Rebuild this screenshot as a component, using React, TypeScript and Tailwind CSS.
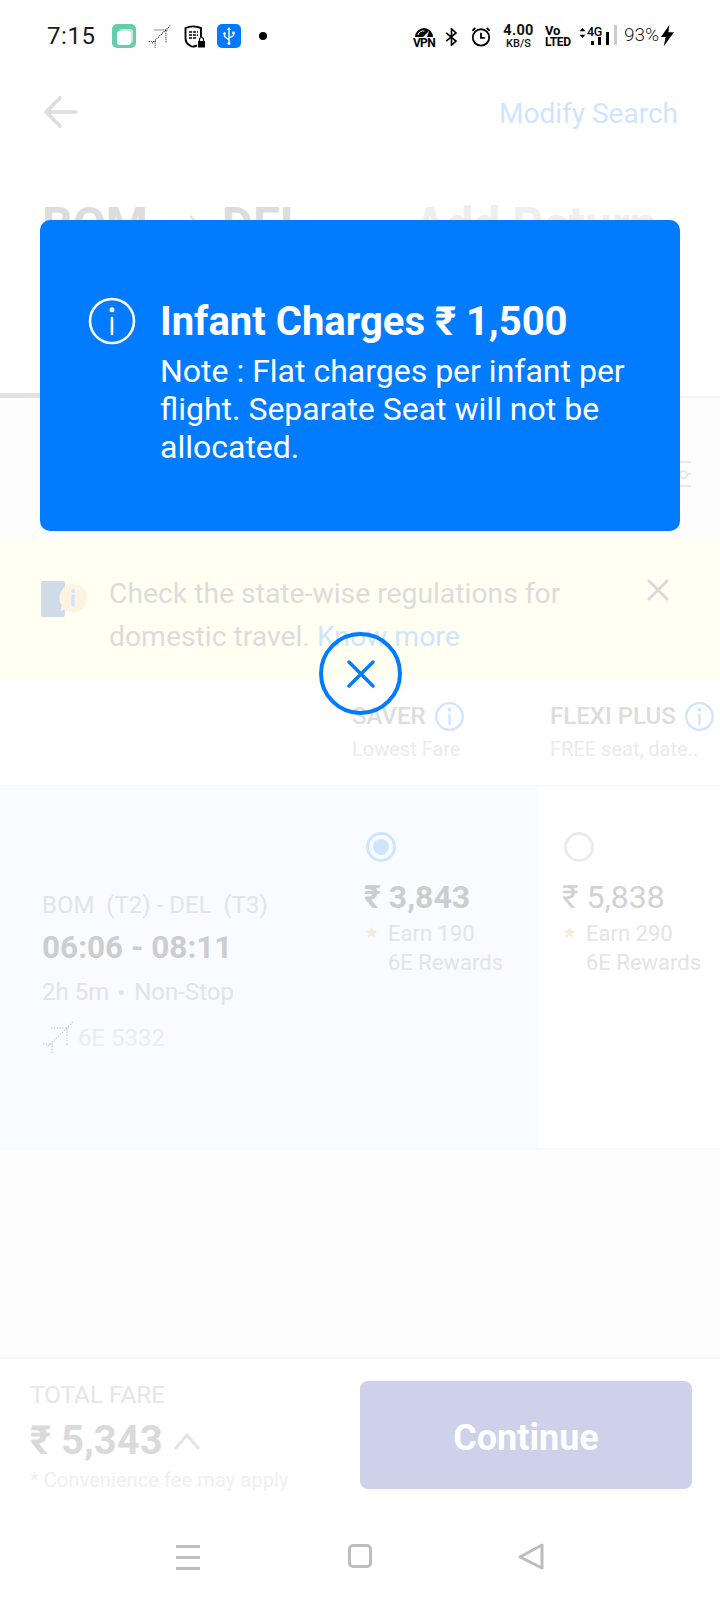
import React from "react";

const Info = ({ size, color, sw = 1.6 }: { size: number; color: string; sw?: number }) => (
  <svg width={size} height={size} viewBox="0 0 24 24" fill="none" stroke={color} strokeWidth={sw} strokeLinecap="round" className="shrink-0">
    <circle cx="12" cy="12" r="11" />
    <line x1="12" y1="10.5" x2="12" y2="18.5" />
    <circle cx="12" cy="6.4" r="0.6" fill={color} />
  </svg>
);

const Plane = ({ size, color }: { size: number; color: string }) => (
  <svg width={size} height={size} viewBox="0 0 32 32" fill="none" stroke={color} strokeWidth="1.5" strokeDasharray="1.4 1.4" className="shrink-0">
    <path d="M31 1 L5 26" />
    <path d="M9 7 H27 M25 8 V25 M1 23 H11 M10 22 V32" />
  </svg>
);

const Star = () => (
  <svg width="13" height="13" viewBox="0 0 24 24" fill="#f6ecd8" className="shrink-0">
    <path d="M12 1.5l3.2 7 7.6.8-5.7 5.1 1.6 7.5L12 18.1 5.3 21.9l1.6-7.5L1.2 9.3l7.6-.8z" />
  </svg>
);

const StatusBar = () => (
  <div className="h-[72px] flex items-start pt-6 pl-[47px] pr-[46px] text-black shrink-0">
    <span className="text-[24px] leading-[24px] tracking-[0.6px] w-[65px] font-normal text-[#1a1a1a]">7:15</span>
    <div className="w-6 h-6 rounded-[5px] bg-[#66cdaa] relative">
      <div className="w-3.5 h-3.5 rounded-[3px] bg-white/60 absolute left-[7px] top-[5px]" />
      <div className="w-3.5 h-3.5 rounded-[3px] bg-white absolute left-[5px] top-[7px]" />
    </div>
    <div className="ml-[12px] mt-[1px]"><Plane size={23} color="#222" /></div>
    <svg width="21" height="23" viewBox="0 0 21 23" className="ml-[13px] mt-[1px]" fill="none">
      <path d="M13 20.5 C 9 22 8 22 6 20.5 C 3 19 1.5 16 1.5 13 V3 C 6 1 12 1 17 3 V12" stroke="#000" strokeWidth="1.9" />
      <path d="M5 7h9M5 10h9M5 13h8" stroke="#000" strokeWidth="1.7" strokeDasharray="3 1" />
      <rect x="14" y="16" width="7" height="6.5" fill="#000" />
      <path d="M15.5 16v-1.5a2 2 0 0 1 4 0V16" stroke="#000" strokeWidth="1.2" />
    </svg>
    <div className="w-6 h-6 rounded-[5px] bg-[#007aff] ml-[12px] flex items-center justify-center">
      <svg width="14" height="18" viewBox="0 0 14 18" fill="none" stroke="#fff" strokeWidth="1.4">
        <path d="M7 1v16M7 13 L2.5 9.5V7M7 11l4.5-2.5V6" />
        <path d="M7 0l2 3H5z" fill="#fff" stroke="none" />
        <circle cx="2.5" cy="6.5" r="1.3" fill="#fff" stroke="none" />
        <rect x="10.3" y="4.6" width="2.4" height="2.4" fill="#fff" stroke="none" />
        <circle cx="7" cy="16.5" r="1.4" fill="#fff" stroke="none" />
      </svg>
    </div>
    <div className="w-2 h-2 rounded-full bg-black ml-[18px] mt-2" />
    <div className="flex-1" />
    <div className="w-5 flex flex-col items-center mt-[3px]">
      <svg width="20" height="11" viewBox="0 0 20 11" fill="none">
        <path d="M1 10 A9 9 0 0 1 19 10 H13 L15 4 L9 10 Z" fill="#000" />
        <path d="M4 8 A6 6 0 0 1 10.5 4" stroke="#fff" strokeWidth="1" />
      </svg>
      <span className="text-[12px] leading-[10px] font-bold tracking-[-0.6px] whitespace-nowrap">VPN</span>
    </div>
    <svg width="15" height="18" viewBox="0 0 15 22" fill="none" stroke="#000" strokeWidth="2" className="ml-[10px] mt-[4px]">
      <path d="M1 6 L13 16 L7.5 21 V1 L13 6 L1 16" />
    </svg>
    <svg width="20" height="21" viewBox="0 0 20 22" fill="none" stroke="#000" strokeWidth="1.9" className="ml-[12px] mt-[2px]">
      <circle cx="10" cy="12" r="8.6" />
      <path d="M10 7v5.5h4M1 5l3-3M19 5l-3-3" />
    </svg>
    <div className="w-[31px] ml-[12px] flex flex-col items-center text-[#111]">
      <span className="text-[14.5px] leading-[13px] font-bold tracking-[0.3px] whitespace-nowrap">4.00</span>
      <span className="text-[11px] leading-[10px] mt-[2px] font-medium whitespace-nowrap">KB/S</span>
    </div>
    <div className="w-[24px] ml-[11px] flex flex-col items-start mt-[2px] text-black font-bold">
      <span className="text-[13px] leading-[10px] tracking-[-0.2px]">Vo</span>
      <span className="text-[12px] leading-[10px] mt-[1px] tracking-[-0.4px] whitespace-nowrap">LTED</span>
    </div>
    <div className="relative w-[30px] h-[24px] ml-[10px]">
      <svg width="7" height="10" viewBox="0 0 8 12" fill="#000" className="absolute left-0 top-[4px]"><path d="M4 0l3.5 4h-7zM4 12l3.5-4h-7z" /></svg>
      <span className="absolute left-[8px] top-[2px] text-[12.5px] leading-[12px] tracking-[-0.3px] font-medium">4G</span>
      <div className="absolute top-[17px] left-[12px] w-[3px] h-[4px] bg-black" />
      <div className="absolute top-[13px] left-[19px] w-[3px] h-[8px] bg-black" />
      <div className="absolute top-[8px] left-[27px] w-[3px] h-[13px] bg-black" />
    </div>
    <div className="w-[3px] h-5 bg-[#ccc] ml-[5px] mt-[1px]" />
    <span className="text-[19px] leading-[22px] w-[33px] ml-[7px] font-light text-[#222] whitespace-nowrap">93%</span>
    <svg width="13" height="23" viewBox="0 0 14 23" fill="#000" className="ml-[4px]"><path d="M9 0L0 13h5l-2 10 11-15H8z" /></svg>
  </div>
);

export default function App() {
  return (
    <div className="relative w-[720px] h-[1600px] overflow-hidden bg-white font-['Roboto',sans-serif]">
      <StatusBar />

      {/* Header */}
      <div className="h-[76px] pt-[4px] pl-[44px] pr-[42px] flex items-center justify-between shrink-0">
        <svg width="34" height="32" viewBox="0 0 34 32" fill="none" stroke="#dedede" strokeWidth="3.6" strokeLinecap="round" strokeLinejoin="round">
          <path d="M32 16H3M16 2L2 16l14 14" />
        </svg>
        <span className="text-[28px] text-[#cfe5ff] mt-[4px]">Modify Search</span>
      </div>

      {/* Title */}
      <div className="h-[245px] pl-[42px] pt-[49px] flex items-start text-[#dcdcdc]">
        <span className="text-[48px] leading-[56px] font-bold">BOM</span>
        <svg width="36" height="40" viewBox="0 0 36 40" fill="none" stroke="#e4e4e4" strokeWidth="2.5" className="ml-[26px] mt-[17px]">
          <path d="M2 19H33M16 2l17 17-17 17" />
        </svg>
        <span className="text-[48px] leading-[56px] font-bold ml-[12px]">DEL</span>
        <span className="text-[48px] leading-[56px] ml-[108px] font-bold text-[#eeeeee] whitespace-nowrap">Add Return</span>
      </div>
      <div className="h-[5px] flex items-end">
        <div className="w-[360px] h-[5px] bg-[#e2e2e2]" />
        <div className="flex-1 h-[2px] bg-[#f5f5f5]" />
      </div>

      {/* Filter strip */}
      <div className="h-[141px] bg-[#fdfdfd] flex justify-end pr-[29px] pt-[63px]">
        <div className="w-3 h-[26px] flex flex-col justify-between">
          <div className="h-[2px] bg-[#e8e8e8]" />
          <div className="flex items-center">
            <div className="w-[9px] h-[9px] rounded-full border-2 border-[#e8e8e8]" />
            <div className="flex-1 h-[2px] bg-[#e8e8e8]" />
          </div>
          <div className="h-[2px] bg-[#e8e8e8]" />
        </div>
      </div>

      {/* Yellow banner */}
      <div className="h-[141px] bg-[#fffff2] pl-[41px] pr-[50px] pt-[33px] flex">
        <div className="relative w-[46px] h-[36px] mt-[9px] shrink-0">
          <div className="w-6 h-[36px] rounded-[2px] bg-[#d0dbea]" />
          <svg width="30" height="30" viewBox="0 0 30 30" className="absolute left-[17px] top-[2px]">
            <path d="M15 1a14 14 0 1 1-8 25.5L2 28l2-5A14 14 0 0 1 15 1z" fill="#fdf3e0" />
            <path d="M15 13v9" stroke="#cfe5ff" strokeWidth="3.4" strokeLinecap="round" />
            <circle cx="15" cy="8" r="2" fill="#cfe5ff" />
          </svg>
        </div>
        <p className="flex-1 ml-[22px] text-[28.3px] leading-[43px] text-[#dcdcdc] whitespace-nowrap">
          Check the state-wise regulations for<br />domestic travel. <span className="text-[#cfe5ff]">Know more</span>
        </p>
        <svg width="24" height="24" viewBox="0 0 24 24" fill="none" stroke="#d8d8d8" strokeWidth="2.6" className="mt-[6px]">
          <path d="M2 2l20 20M22 2L2 22" />
        </svg>
      </div>

      {/* Fare headers */}
      <div className="h-[105px] flex pt-[20px]">
        <div className="w-[352px]" />
        <div className="w-[198px]">
          <div className="flex items-center gap-[9px] text-[24px] leading-[32px] text-[#dddddd] font-medium">SAVER <Info size={29} color="#cfe5ff" sw={1.9} /></div>
          <div className="text-[20px] leading-[28px] mt-[3px] text-[#ebebeb]">Lowest Fare</div>
        </div>
        <div>
          <div className="flex items-center gap-[9px] text-[24px] leading-[32px] text-[#dddddd] font-medium whitespace-nowrap">FLEXI PLUS <Info size={29} color="#cfe5ff" sw={1.9} /></div>
          <div className="text-[20px] leading-[28px] mt-[3px] text-[#ebebeb] whitespace-nowrap">FREE seat, date..</div>
        </div>
      </div>

      {/* Flight row */}
      <div className="h-[365px] border-y-2 border-[#f9f9f9] flex">
        <div className="w-[538px] bg-[#f8fbff] flex">
          <div className="w-[364px] pl-[42px] pt-[104px]">
            <div className="text-[24px] leading-[28px] text-[#e4e4e4] whitespace-pre">BOM  (T2) - DEL  (T3)</div>
            <div className="text-[31.5px] leading-[40px] mt-[9px] font-bold text-[#cdcdcd]">06:06 - 08:11</div>
            <div className="text-[24px] leading-[28px] mt-[10px] text-[#e4e4e4] flex items-center">2h 5m<span className="w-[5px] h-[5px] rounded-full bg-[#e4e4e4] mx-[10px]" />Non-Stop</div>
            <div className="flex items-center mt-[15px]">
              <Plane size={32} color="#ccd2ee" />
              <span className="text-[24px] leading-[28px] text-[#ededed] ml-[4px] mt-[2px]">6E 5332</span>
            </div>
          </div>
          <div className="flex-1 pt-[45px]">
            <div className="w-[30px] h-[30px] ml-[2px] rounded-full border-[3px] border-[#cfe5ff] flex items-center justify-center">
              <div className="w-[16px] h-[16px] rounded-full bg-[#cfe5ff]" />
            </div>
            <div className="text-[32px] leading-[40px] mt-[15px] font-bold text-[#cdcdcd] whitespace-nowrap">₹ 3,843</div>
            <div className="flex mt-[2px]">
              <div className="w-[24px] pl-[1px] pt-[7px]"><Star /></div>
              <div className="text-[22px] leading-[29px] text-[#e4e4e4] whitespace-nowrap">Earn 190<br />6E Rewards</div>
            </div>
          </div>
        </div>
        <div className="flex-1 bg-white pl-[24px] pt-[45px]">
          <div className="w-[30px] h-[30px] ml-[2px] rounded-full border-[3px] border-[#ebebeb]" />
          <div className="text-[32px] leading-[40px] mt-[15px] text-[#d2d2d2]">₹ 5,838</div>
          <div className="flex mt-[2px]">
            <div className="w-[24px] pl-[1px] pt-[7px]"><Star /></div>
            <div className="text-[22px] leading-[29px] text-[#e4e4e4] whitespace-nowrap">Earn 290<br />6E Rewards</div>
          </div>
        </div>
      </div>

      {/* Spacer */}
      <div className="h-[207px] bg-[#fdfdfd]" />

      {/* Footer */}
      <div className="h-[163px] border-t-2 border-[#f7f7f7] pl-[30px] pr-[28px] pt-[22px] flex justify-between">
        <div>
          <div className="text-[24.3px] leading-[28px] text-[#e6e6e6] whitespace-nowrap">TOTAL FARE</div>
          <div className="flex items-center mt-[9px]">
            <span className="text-[40px] leading-[46px] font-bold text-[#dadada]">₹ 5,343</span>
            <svg width="26" height="18" viewBox="0 0 26 18" fill="none" stroke="#e4e4e4" strokeWidth="3" strokeLinecap="round" className="ml-[11px]"><path d="M2 16L13 3l11 13" /></svg>
          </div>
          <div className="text-[20.2px] leading-[26px] mt-[3px] text-[#f0f0f0] whitespace-nowrap">* Convenience fee may apply</div>
        </div>
        <div className="w-[332px] h-[108px] bg-[#cdd2ea] rounded-[8px] flex items-center justify-center pt-[5px] text-white text-[36px] font-bold">Continue</div>
      </div>

      {/* Nav bar */}
      <div className="flex items-start pt-[23px] pl-[176px]">
        <div className="w-6 flex flex-col gap-[8px] mt-[2px]">
          <div className="h-[3px] bg-[#bdbdbd]" /><div className="h-[3px] bg-[#bdbdbd]" /><div className="h-[3px] bg-[#bdbdbd]" />
        </div>
        <div className="w-6 h-6 ml-[148px] mt-[1px] rounded-[5px] border-[3px] border-[#bdbdbd]" />
        <svg width="26" height="27" viewBox="0 0 26 27" fill="none" stroke="#bdbdbd" strokeWidth="3" strokeLinejoin="round" className="ml-[146px]">
          <path d="M24 2 L2 14 L24 25 Z" />
        </svg>
      </div>

      {/* Overlay */}
      <div className="absolute left-[40px] top-[220px] w-[640px] h-[311px] rounded-[10px] bg-[#037bff] text-white flex pl-[48px] pr-[40px] pt-[80px]">
        <div className="w-[72px] mt-[-3px]"><Info size={48} color="#fff" sw={1.3} /></div>
        <div>
          <div className="text-[40px] leading-[44px] font-bold whitespace-nowrap">Infant Charges ₹ 1,500</div>
          <div className="text-[32px] leading-[38px] mt-[8px] whitespace-nowrap">Note : Flat charges per infant per<br />flight. Separate Seat will not be<br />allocated.</div>
        </div>
      </div>
      <div className="absolute left-[319px] top-[632px] w-[83px] h-[83px] rounded-full border-[4px] border-[#037bff] flex items-center justify-center">
        <svg width="28" height="28" viewBox="0 0 28 28" fill="none" stroke="#037bff" strokeWidth="3.4" strokeLinecap="round"><path d="M2 2l24 24M26 2L2 26" /></svg>
      </div>
    </div>
  );
}
